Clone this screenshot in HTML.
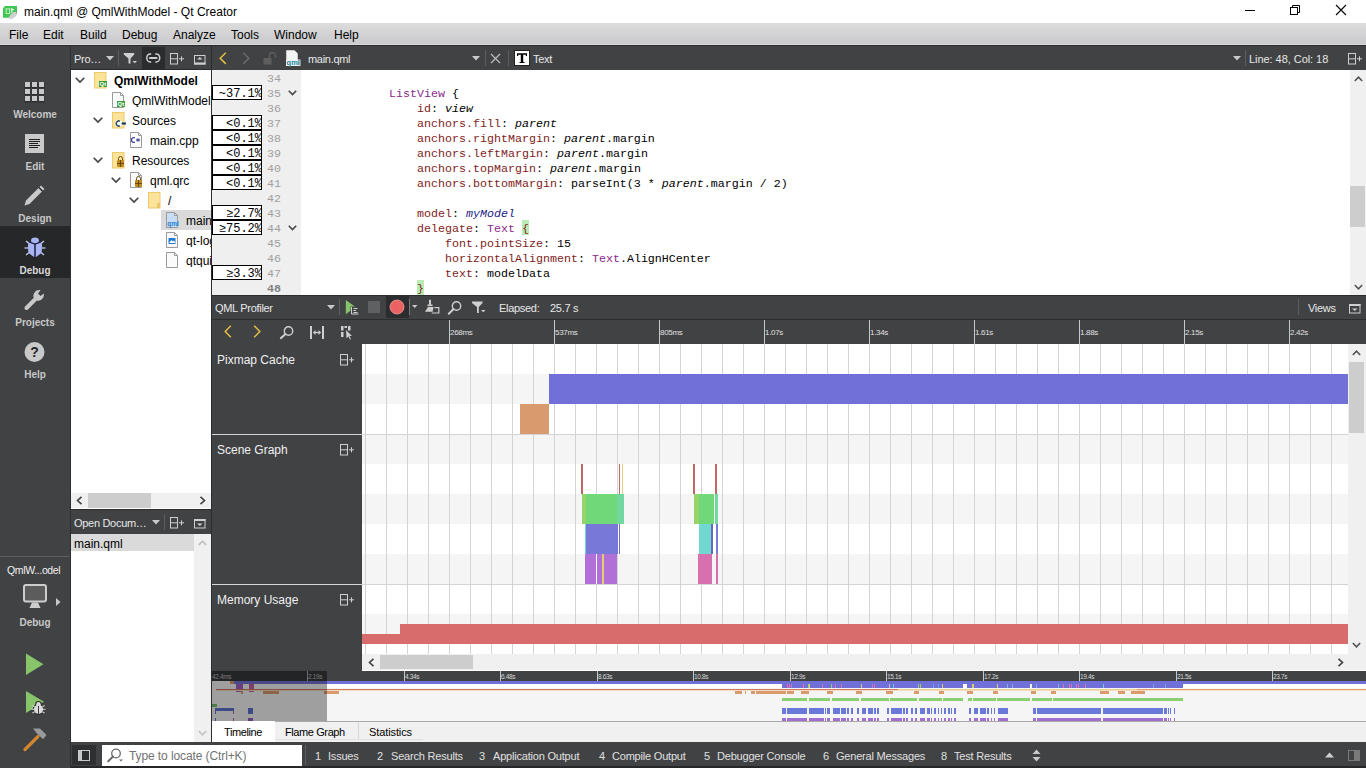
<!DOCTYPE html>
<html><head><meta charset="utf-8">
<style>
*{margin:0;padding:0;box-sizing:border-box}
html,body{width:1366px;height:768px;overflow:hidden;background:#fff;font-family:"Liberation Sans",sans-serif;font-size:12px;color:#000}
.a{position:absolute}
.t{position:absolute;white-space:pre;line-height:1}
.w{color:#e6e6e6}
.mono{font-family:"Liberation Mono",monospace}
svg{position:absolute;overflow:visible}
.mono{font-size:11.667px}
.tb{font-size:11px;color:#e8e8e8;letter-spacing:-0.3px}
.rl2{font-size:6.5px;color:#d8d8d8;letter-spacing:-0.35px}
.tab{font-size:11px;color:#000;letter-spacing:-0.4px}
.sb{font-size:11px;color:#e0e0e0;letter-spacing:-0.2px}
.rl{font-size:8px;color:#e0e0e0;letter-spacing:-0.3px}
.trk{font-size:12px;color:#f0f0f0}
.code{color:#000}
.box{left:212px;width:50px;height:15px;border:1px solid #000;background:#fff;overflow:hidden;font-family:"Liberation Mono",monospace;font-size:12px;line-height:14px;text-align:right;white-space:pre}
.box span{position:absolute;right:-1px;top:1px}
</style></head><body>
<!-- TITLE BAR -->
<div class="a" style="left:0;top:0;width:1366px;height:23px;background:#fff"></div>
<svg style="left:0;top:2px" width="24" height="20" viewBox="0 0 24 20"><path d="M3 6.5 L5 4 H17 V12 L11 15.8 H3Z" fill="#41c553"/><path d="M6.2 6.8 H9.5 V11.5 H6.2Z" fill="none" stroke="#b8f5b8" stroke-width="1.1"/><path d="M11.8 6 V11 M10.8 7.6 H14" stroke="#e8ffe8" stroke-width="1.1"/><ellipse cx="13" cy="13.5" rx="4.6" ry="2.4" transform="rotate(-40 13 13.5)" fill="#cfcfcf"/><path d="M16 10 L17 9.5 V12" fill="#8a8a8a"/></svg>
<div class="t" style="left:24px;top:6px;font-size:12px;color:#000">main.qml @ QmlWithModel - Qt Creator</div>
<div class="a" style="left:1245px;top:10px;width:10px;height:1px;background:#000"></div>
<svg style="left:1290px;top:5px" width="10" height="10"><rect x="0.5" y="2.5" width="7" height="7" fill="none" stroke="#000"/><path d="M2.5 2.5V0.5H9.5V7.5H7.5" fill="none" stroke="#000"/></svg>
<svg style="left:1336px;top:5px" width="10" height="10"><path d="M0 0L10 10M10 0L0 10" stroke="#000" stroke-width="1.1"/></svg>
<!-- MENU BAR -->
<div class="a" style="left:0;top:23px;width:1366px;height:22px;background:linear-gradient(#dcdcdd,#c9c9cb)"></div>
<div class="t" style="left:9px;top:29px">File</div>
<div class="t" style="left:43px;top:29px">Edit</div>
<div class="t" style="left:80px;top:29px">Build</div>
<div class="t" style="left:122px;top:29px">Debug</div>
<div class="t" style="left:173px;top:29px">Analyze</div>
<div class="t" style="left:231px;top:29px">Tools</div>
<div class="t" style="left:274px;top:29px">Window</div>
<div class="t" style="left:334px;top:29px">Help</div>
<div class="a" style="left:0;top:44px;width:1366px;height:1px;background:#dadadb"></div>
<div class="a" style="left:0;top:45px;width:1366px;height:1px;background:#2a2b2c"></div>

<!-- MODE BAR -->
<div class="a" style="left:0;top:46px;width:70px;height:722px;background:#404244"></div>
<div class="a" style="left:70px;top:46px;width:1px;height:722px;background:#2e2f30"></div>

<!-- selected debug -->
<div class="a" style="left:0;top:226px;width:70px;height:52px;background:#262728"></div>
<!-- welcome grid -->
<svg style="left:24px;top:81px" width="22" height="22" viewBox="0 0 22 22">
<g fill="#1e1f20" opacity=".6"><rect x="0.5" y="1.5" width="6" height="6"/><rect x="7.5" y="1.5" width="6" height="6"/><rect x="14.5" y="1.5" width="6" height="6"/><rect x="0.5" y="8.5" width="6" height="6"/><rect x="7.5" y="8.5" width="6" height="6"/><rect x="14.5" y="8.5" width="6" height="6"/><rect x="0.5" y="15.5" width="6" height="6"/><rect x="7.5" y="15.5" width="6" height="6"/><rect x="14.5" y="15.5" width="6" height="6"/></g>
<g fill="#c9c9c9"><rect x="1" y="1" width="5" height="5"/><rect x="8" y="1" width="5" height="5"/><rect x="15" y="1" width="5" height="5"/><rect x="1" y="8" width="5" height="5"/><rect x="8" y="8" width="5" height="5"/><rect x="15" y="8" width="5" height="5"/><rect x="1" y="15" width="5" height="5"/><rect x="8" y="15" width="5" height="5"/><rect x="15" y="15" width="5" height="5"/></g></svg>
<div class="t" style="left:0;width:70px;text-align:center;top:110px;font-weight:bold;font-size:10px;color:#c8c8c8">Welcome</div>
<!-- edit -->
<svg style="left:25px;top:134px" width="19" height="19" viewBox="0 0 19 19"><rect x="0" y="0" width="19" height="19" fill="#c9c9c9"/><g fill="#1e1e1e"><rect x="4" y="5" width="11" height="1"/><rect x="4" y="7" width="11" height="1"/><rect x="4" y="9" width="9" height="1"/><rect x="4" y="11" width="11" height="1"/><rect x="4" y="13" width="9" height="1"/></g></svg>
<div class="t" style="left:0;width:70px;text-align:center;top:162px;font-weight:bold;font-size:10px;color:#c8c8c8">Edit</div>
<!-- design -->
<svg style="left:23px;top:185px" width="22" height="22" viewBox="0 0 22 22"><path d="M1.5 20.5 L3 15.5 L15.5 3 L19 6.5 L6.5 19 Z" fill="#c9c9c9"/><path d="M16.5 2 L18 0.5 L21.5 4 L20 5.5 Z" fill="#c9c9c9"/><path d="M15.8 2.7 L19.3 6.2" stroke="#1e1e1e" stroke-width="1"/></svg>
<div class="t" style="left:0;width:70px;text-align:center;top:214px;font-weight:bold;font-size:10px;color:#c8c8c8">Design</div>
<!-- debug -->
<svg style="left:24px;top:237px" width="22" height="21" viewBox="0 0 22 21">
<g stroke="#c8cff0" stroke-width="1.2"><path d="M2 4 L5 6.5"/><path d="M20 4 L17 6.5"/><path d="M0.5 11 L4 11"/><path d="M21.5 11 L18 11"/><path d="M2 18 L5 15.5"/><path d="M20 18 L17 15.5"/></g>
<ellipse cx="11" cy="3.5" rx="4" ry="3" fill="#a9b5f2"/>
<path d="M11 6 L4.5 4.8 L3.8 10 L4.5 16 L10 20 L11 20 Z" fill="#a9b5f2"/>
<path d="M11 6 L17.5 4.8 L18.2 10 L17.5 16 L12 20 L11 20 Z" fill="#a9b5f2"/>
<path d="M5 5 L11 7 L17 5" fill="none" stroke="#15163a" stroke-width="1.2"/><path d="M11 7 V20.5" stroke="#15163a" stroke-width="1.4"/></svg>
<div class="t" style="left:0;width:70px;text-align:center;top:266px;font-weight:bold;font-size:10px;color:#d8d8d8">Debug</div>
<!-- projects wrench -->
<svg style="left:24px;top:289px" width="22" height="22" viewBox="0 0 22 22"><path d="M2.5 19 L11 10.5" stroke="#c9c9c9" stroke-width="4" stroke-linecap="round"/><path d="M9.5 8.5 A6 6 0 0 1 16.5 1.2 L14 4.5 L16.5 7 L19.8 4.5 A6 6 0 0 1 12.5 11.5 Z" fill="#c9c9c9"/></svg>
<div class="t" style="left:0;width:70px;text-align:center;top:318px;font-weight:bold;font-size:10px;color:#c8c8c8">Projects</div>
<!-- help -->
<svg style="left:24px;top:342px" width="21" height="21" viewBox="0 0 21 21"><circle cx="10.5" cy="10" r="10" fill="#c9c9c9"/><text x="10.5" y="15" text-anchor="middle" font-family="Liberation Sans" font-weight="bold" font-size="14" fill="#262626">?</text></svg>
<div class="t" style="left:0;width:70px;text-align:center;top:370px;font-weight:bold;font-size:10px;color:#c8c8c8">Help</div>
<!-- kit selector -->
<div class="a" style="left:0;top:556px;width:70px;height:1px;background:#5c5e60"></div>
<div class="t" style="left:7px;top:565px;font-size:10.5px;color:#f0f0f0;letter-spacing:-0.35px">QmlW...odel</div>
<svg style="left:23px;top:584px" width="25" height="25" viewBox="0 0 25 25"><rect x="1" y="1" width="22" height="16.5" rx="2" fill="#5c5c5c" stroke="#cdcdcd" stroke-width="2"/><path d="M9 18.5 L15 18.5 L17.5 24 L6.5 24 Z" fill="#cdcdcd"/></svg>
<svg style="left:56px;top:598px" width="5" height="8"><path d="M0 0 L4.5 4 L0 8Z" fill="#c9c9c9"/></svg>
<div class="t" style="left:0;width:70px;text-align:center;top:618px;font-weight:bold;font-size:10px;color:#c8c8c8">Debug</div>
<!-- run -->
<svg style="left:25px;top:653px" width="20" height="23"><path d="M1 0.5 L18.5 11.3 L1 22Z" fill="#88c46a"/></svg>
<svg style="left:25px;top:690px" width="22" height="26" viewBox="0 0 22 26"><path d="M1 1 L19 11.8 L1 23Z" fill="#88c46a"/><g stroke="#2b2b2b" stroke-width="2.2" fill="#2b2b2b"><circle cx="13.5" cy="14.3" r="2.2"/><ellipse cx="13.5" cy="19.3" rx="4.6" ry="4.6"/></g><g stroke="#dcdcdc" stroke-width="1.1"><path d="M7.5 15.5 L9.5 16.8 M19.5 15.5 L17.5 16.8 M6.5 19.3 H9 M20.5 19.3 H18 M7.5 23 L9.5 21.8 M19.5 23 L17.5 21.8"/></g><circle cx="13.5" cy="14.3" r="2.2" fill="#dcdcdc"/><ellipse cx="13.5" cy="19.3" rx="4.6" ry="4.6" fill="#dcdcdc"/><path d="M13.5 16 V24" stroke="#3a3a3a" stroke-width="1"/></svg>
<svg style="left:23px;top:728px" width="25" height="24" viewBox="0 0 25 24"><path d="M2 21.5 L15 8.5" stroke="#d4862e" stroke-width="3.2" stroke-linecap="round"/><path d="M10 0.5 L17 0.5 L23.5 7 L20 11.2 L13.5 5Z" fill="#9a9a9a"/></svg>


<!-- TREE TOOLBAR -->
<div class="a" style="left:71px;top:46px;width:140px;height:23px;background:#404244"></div>
<div class="a" style="left:71px;top:69px;width:140px;height:1px;background:#2b2c2d"></div>
<div class="t tb" style="left:74px;top:54px">Pro…</div>
<svg style="left:106px;top:56px" width="8" height="5"><path d="M0 0H8L4 4.5Z" fill="#c9c9c9"/></svg>
<div class="a" style="left:118px;top:50px;width:1px;height:16px;background:#5b5d5f"></div>
<svg style="left:123px;top:52px" width="15" height="13" viewBox="0 0 15 13"><path d="M0.8 1 H11.2 V2.5 L7.5 6.5 V11.5 L5.5 11.5 V6.5 L0.8 2.5Z" fill="#cfcfcf"/><path d="M9.5 9 H14 L11.75 11.2Z" fill="#cfcfcf"/></svg>
<div class="a" style="left:142px;top:47px;width:23px;height:22px;background:#2b2c2d"></div>
<svg style="left:146px;top:53px" width="15" height="10" viewBox="0 0 15 10"><path d="M5.2 0.9 H4.2 A3.4 4 0 0 0 4.2 8.9 H5.2 M9.3 0.9 H10.3 A3.4 4 0 0 1 10.3 8.9 H9.3" fill="none" stroke="#cfcfcf" stroke-width="1.5"/><rect x="3" y="4" width="8.5" height="1.9" rx=".9" fill="#cfcfcf"/></svg>
<svg style="left:170px;top:53px" width="15" height="12" viewBox="0 0 15 12"><rect x="0.5" y="0.5" width="7" height="10.5" fill="none" stroke="#cfcfcf"/><path d="M0.5 5.8 H7.5 M9 5.8 H14 M11.5 3.3 V8.3" stroke="#cfcfcf"/></svg>
<svg style="left:194px;top:55px" width="12" height="10" viewBox="0 0 12 10"><rect x="0.5" y="0.5" width="10.5" height="8.5" fill="none" stroke="#cfcfcf"/><rect x="0" y="7.5" width="11.5" height="2" fill="#cfcfcf"/><path d="M3 4.5 H8.5 L5.75 2Z" fill="#cfcfcf"/></svg>

<!-- TREE -->
<div class="a" style="left:71px;top:70px;width:140px;height:439px;background:#fff"></div>
<svg style="left:75px;top:77px" width="10" height="6" viewBox="0 0 10 6"><path d="M0.7 0.7 L5 5 L9.3 0.7" fill="none" stroke="#444" stroke-width="1.6"/></svg><svg style="left:94px;top:72px" width="14" height="16" viewBox="0 0 14 16"><rect x="0.5" y="0.5" width="11.5" height="15.5" fill="#fbe39a" stroke="#efc96a"/><rect x="5" y="9" width="8" height="6" fill="#3b9e3c"/><text x="5.6" y="14.4" font-size="6" font-family="Liberation Sans" font-weight="bold" fill="#fff">Qt</text></svg>
<div class="t" style="left:114px;top:75px;font-weight:bold">QmlWithModel</div>
<svg style="left:112px;top:92px" width="14" height="16" viewBox="0 0 14 16"><path d="M0.5 0.5 H8.5 L11.5 3.5 V15.5 H0.5Z" fill="#fafafa" stroke="#9a9a9a"/><path d="M8.5 0.5 V3.5 H11.5" fill="none" stroke="#9a9a9a"/><rect x="5" y="9" width="8" height="6" fill="#3b9e3c"/><text x="5.6" y="14.4" font-size="6" font-family="Liberation Sans" font-weight="bold" fill="#fff">Qt</text></svg>
<div class="t" style="left:132px;top:95px;width:79px;overflow:hidden">QmlWithModel</div>
<svg style="left:93px;top:117px" width="10" height="6" viewBox="0 0 10 6"><path d="M0.7 0.7 L5 5 L9.3 0.7" fill="none" stroke="#444" stroke-width="1.6"/></svg><svg style="left:112px;top:112px" width="14" height="16" viewBox="0 0 14 16"><rect x="0.5" y="0.5" width="11.5" height="15.5" fill="#fbe39a" stroke="#efc96a"/><circle cx="6.5" cy="11.5" r="3.6" fill="#f4fbff"/><path d="M8 9.2 A2.6 2.6 0 1 0 8 13.8" fill="none" stroke="#2f4f5f" stroke-width="1.5"/><path d="M9.5 11.5 H14 M11 10 V13 M13 10 V13" stroke="#16385a" stroke-width="1.1"/></svg>
<div class="t" style="left:132px;top:115px">Sources</div>
<svg style="left:130px;top:132px" width="14" height="16" viewBox="0 0 14 16"><path d="M0.5 0.5 H8.5 L11.5 3.5 V15.5 H0.5Z" fill="#fafafa" stroke="#9a9a9a"/><path d="M8.5 0.5 V3.5 H11.5" fill="none" stroke="#9a9a9a"/><path d="M4.8 5.8 A2.4 2.4 0 1 0 4.8 10.2" fill="none" stroke="#3b3b9a" stroke-width="1.3"/><path d="M6 8 H10 M7.3 6.5 V9.5 M8.8 6.5 V9.5" stroke="#3b3b9a" stroke-width="1"/></svg>
<div class="t" style="left:150px;top:135px">main.cpp</div>
<svg style="left:93px;top:157px" width="10" height="6" viewBox="0 0 10 6"><path d="M0.7 0.7 L5 5 L9.3 0.7" fill="none" stroke="#444" stroke-width="1.6"/></svg><svg style="left:112px;top:152px" width="14" height="16" viewBox="0 0 14 16"><rect x="0.5" y="0.5" width="11.5" height="15.5" fill="#fbe39a" stroke="#efc96a"/><rect x="5" y="8" width="7" height="7" rx="1" fill="#c08b1a"/><path d="M6.5 8 V6.5 A2 2 0 0 1 10.5 6.5 V8" fill="none" stroke="#6b4a10" stroke-width="1"/><path d="M5 11.5 H12 M8.5 8 V15" stroke="#5a3a08" stroke-width=".8"/></svg>
<div class="t" style="left:132px;top:155px">Resources</div>
<svg style="left:111px;top:177px" width="10" height="6" viewBox="0 0 10 6"><path d="M0.7 0.7 L5 5 L9.3 0.7" fill="none" stroke="#444" stroke-width="1.6"/></svg><svg style="left:130px;top:172px" width="14" height="16" viewBox="0 0 14 16"><path d="M0.5 0.5 H8.5 L11.5 3.5 V15.5 H0.5Z" fill="#fafafa" stroke="#9a9a9a"/><path d="M8.5 0.5 V3.5 H11.5" fill="none" stroke="#9a9a9a"/><rect x="5" y="8" width="7" height="7" rx="1" fill="#c08b1a"/><path d="M6.5 8 V6.5 A2 2 0 0 1 10.5 6.5 V8" fill="none" stroke="#6b4a10" stroke-width="1"/><path d="M5 11.5 H12 M8.5 8 V15" stroke="#5a3a08" stroke-width=".8"/></svg>
<div class="t" style="left:150px;top:175px">qml.qrc</div>
<svg style="left:129px;top:197px" width="10" height="6" viewBox="0 0 10 6"><path d="M0.7 0.7 L5 5 L9.3 0.7" fill="none" stroke="#444" stroke-width="1.6"/></svg><svg style="left:148px;top:192px" width="14" height="16" viewBox="0 0 14 16"><rect x="0.5" y="0.5" width="11.5" height="15.5" fill="#fbe39a" stroke="#efc96a"/><rect x="9" y="11" width="3" height="5" fill="#e9c66a"/></svg>
<div class="t" style="left:168px;top:195px">/</div>
<div class="a" style="left:161px;top:210px;width:50px;height:20px;background:#dadada"></div>
<svg style="left:166px;top:212px" width="14" height="16" viewBox="0 0 14 16"><path d="M0.5 0.5 H8.5 L11.5 3.5 V15.5 H0.5Z" fill="#c9def5" stroke="#9a9a9a"/><path d="M8.5 0.5 V3.5 H11.5" fill="none" stroke="#9a9a9a"/><text x="1.2" y="14" font-size="6.5" font-family="Liberation Sans" fill="#1f7fcf" font-weight="bold">qml</text></svg>
<div class="t" style="left:186px;top:215px;width:25px;overflow:hidden">main.qml</div>
<svg style="left:166px;top:232px" width="14" height="16" viewBox="0 0 14 16"><path d="M0.5 0.5 H8.5 L11.5 3.5 V15.5 H0.5Z" fill="#fafafa" stroke="#9a9a9a"/><path d="M8.5 0.5 V3.5 H11.5" fill="none" stroke="#9a9a9a"/><rect x="2.5" y="6" width="7" height="6" fill="#1f78d1"/><path d="M3 11 L5.5 8 L7 9.5 L8 8.5 L9.5 11Z" fill="#fff"/></svg>
<div class="t" style="left:186px;top:235px;width:25px;overflow:hidden">qt-logo.png</div>
<svg style="left:166px;top:252px" width="14" height="16" viewBox="0 0 14 16"><path d="M0.5 0.5 H8.5 L11.5 3.5 V15.5 H0.5Z" fill="#fafafa" stroke="#9a9a9a"/><path d="M8.5 0.5 V3.5 H11.5" fill="none" stroke="#9a9a9a"/></svg>
<div class="t" style="left:186px;top:255px;width:25px;overflow:hidden">qtquickcontrols2.conf</div>
<!-- tree hscroll -->
<div class="a" style="left:71px;top:493px;width:140px;height:15px;background:#f0f0f0"></div>
<div class="a" style="left:88px;top:493px;width:63px;height:15px;background:#cdcdcd"></div>
<svg style="left:76px;top:496px" width="7" height="9"><path d="M5.5 0.8 L1.5 4.5 L5.5 8.2" fill="none" stroke="#404040" stroke-width="1.6"/></svg>
<svg style="left:199px;top:496px" width="7" height="9"><path d="M1.5 0.8 L5.5 4.5 L1.5 8.2" fill="none" stroke="#404040" stroke-width="1.6"/></svg>

<!-- OPEN DOCUMENTS -->
<div class="a" style="left:71px;top:509px;width:140px;height:25px;background:#404244"></div>
<div class="a" style="left:71px;top:509px;width:140px;height:1px;background:#2b2c2d"></div>
<div class="t tb" style="left:74px;top:518px">Open Docum…</div>
<svg style="left:152px;top:520px" width="8" height="5"><path d="M0 0H8L4 4.5Z" fill="#c9c9c9"/></svg>
<div class="a" style="left:164px;top:514px;width:1px;height:16px;background:#5b5d5f"></div>
<svg style="left:170px;top:517px" width="15" height="12" viewBox="0 0 15 12"><rect x="0.5" y="0.5" width="7" height="10.5" fill="none" stroke="#cfcfcf"/><path d="M0.5 5.8 H7.5 M9 5.8 H14 M11.5 3.3 V8.3" stroke="#cfcfcf"/></svg>
<svg style="left:194px;top:519px" width="12" height="10" viewBox="0 0 12 10"><rect x="0.5" y="0.5" width="10.5" height="8.5" fill="none" stroke="#cfcfcf"/><rect x="0" y="0" width="11.5" height="2" fill="#cfcfcf"/><path d="M3 4.5 H8.5 L5.75 7Z" fill="#cfcfcf"/></svg>
<div class="a" style="left:71px;top:534px;width:140px;height:208px;background:#fff"></div>
<div class="a" style="left:71px;top:534px;width:123px;height:17px;background:#dadada"></div>
<div class="t" style="left:74px;top:538px">main.qml</div>
<div class="a" style="left:194px;top:534px;width:17px;height:208px;background:#f0f0f0"></div>
<svg style="left:198px;top:540px" width="9" height="6"><path d="M0.8 5 L4.5 1.2 L8.2 5" fill="none" stroke="#c2c2c2" stroke-width="1.8"/></svg>
<svg style="left:198px;top:730px" width="9" height="6"><path d="M0.8 1 L4.5 4.8 L8.2 1" fill="none" stroke="#c2c2c2" stroke-width="1.5"/></svg>
<div class="a" style="left:211px;top:46px;width:1px;height:696px;background:#2b2c2d"></div>


<!-- EDITOR TOOLBAR -->
<div class="a" style="left:212px;top:46px;width:1154px;height:24px;background:#404244"></div>
<svg style="left:219px;top:52px" width="8" height="13"><path d="M6.8 0.7 L1.2 6.3 L6.8 11.9" fill="none" stroke="#e3bf45" stroke-width="1.5"/></svg>
<svg style="left:242px;top:52px" width="8" height="13"><path d="M1.2 0.7 L6.8 6.3 L1.2 11.9" fill="none" stroke="#6a6a6a" stroke-width="1.5"/></svg>
<svg style="left:263px;top:52px" width="14" height="13" viewBox="0 0 14 13"><rect x="0.5" y="6" width="8" height="6.5" fill="#5e5e5e"/><path d="M6.5 6 V3.5 A3 3 0 0 1 12.5 3.5 V5.5" fill="none" stroke="#5e5e5e" stroke-width="1.4"/></svg>
<svg style="left:286px;top:50px" width="15" height="16" viewBox="0 0 15 16"><path d="M0.5 0.5 H8.5 L11.5 3.5 V15.5 H0.5Z" fill="#f4f4f4" stroke="#c8c8c8"/><rect x="0" y="9.5" width="14.5" height="6.5" fill="#f4f4f4" opacity=".9"/><text x="0.6" y="14.6" font-size="7.5" font-family="Liberation Sans" fill="#17859a" font-weight="bold">qml</text></svg>
<div class="t tb" style="left:308px;top:54px">main.qml</div>
<svg style="left:472px;top:56px" width="8" height="5"><path d="M0 0H8L4 4.5Z" fill="#c9c9c9"/></svg>
<div class="a" style="left:485px;top:50px;width:1px;height:16px;background:#5b5d5f"></div>
<svg style="left:490px;top:53px" width="11" height="11"><path d="M1 1 L10 10 M10 1 L1 10" stroke="#bdbdbd" stroke-width="1.2"/></svg>
<div class="a" style="left:508px;top:50px;width:1px;height:16px;background:#5b5d5f"></div>
<svg style="left:514px;top:50px" width="16" height="16" viewBox="0 0 16 16"><rect x="0.5" y="0.5" width="15" height="15" fill="#fff" stroke="#222"/><path d="M3 3.2 H13 V6 H11.8 V4.8 H9.2 V12 H10.5 V13 H5.5 V12 H6.8 V4.8 H4.2 V6 H3Z" fill="#000"/></svg>
<div class="t tb" style="left:533px;top:54px">Text</div>
<svg style="left:1233px;top:56px" width="8" height="5"><path d="M0 0H8L4 4.5Z" fill="#c9c9c9"/></svg>
<div class="a" style="left:1245px;top:50px;width:1px;height:16px;background:#5b5d5f"></div>
<div class="t tb" style="left:1249px;top:54px;letter-spacing:-0.05px">Line: 48, Col: 18</div>
<svg style="left:1348px;top:53px" width="15" height="12" viewBox="0 0 15 12"><rect x="0.5" y="0.5" width="7" height="10.5" fill="none" stroke="#cfcfcf"/><path d="M0.5 5.8 H7.5 M9 5.8 H14 M11.5 3.3 V8.3" stroke="#cfcfcf"/></svg>

<!-- EDITOR -->
<div class="a" style="left:212px;top:70px;width:1154px;height:225px;background:#fff;overflow:hidden">
</div>
<div class="a" style="left:212px;top:70px;width:89px;height:225px;background:#efefef"></div>
<div class="a box" style="top:85px"><span>~37.1%</span></div>
<div class="a box" style="top:115px"><span>&lt;0.1%</span></div>
<div class="a box" style="top:130px"><span>&lt;0.1%</span></div>
<div class="a box" style="top:145px"><span>&lt;0.1%</span></div>
<div class="a box" style="top:160px"><span>&lt;0.1%</span></div>
<div class="a box" style="top:175px"><span>&lt;0.1%</span></div>
<div class="a box" style="top:205px"><span>≥2.7%</span></div>
<div class="a box" style="top:220px"><span>≥75.2%</span></div>
<div class="a box" style="top:265px"><span>≥3.3%</span></div>
<div class="t mono" style="left:250px;width:31px;text-align:right;top:74px;color:#a0a0a0;">34</div>
<div class="t mono" style="left:250px;width:31px;text-align:right;top:89px;color:#a0a0a0;">35</div>
<div class="t mono" style="left:250px;width:31px;text-align:right;top:104px;color:#a0a0a0;">36</div>
<div class="t mono" style="left:250px;width:31px;text-align:right;top:119px;color:#a0a0a0;">37</div>
<div class="t mono" style="left:250px;width:31px;text-align:right;top:134px;color:#a0a0a0;">38</div>
<div class="t mono" style="left:250px;width:31px;text-align:right;top:149px;color:#a0a0a0;">39</div>
<div class="t mono" style="left:250px;width:31px;text-align:right;top:164px;color:#a0a0a0;">40</div>
<div class="t mono" style="left:250px;width:31px;text-align:right;top:179px;color:#a0a0a0;">41</div>
<div class="t mono" style="left:250px;width:31px;text-align:right;top:194px;color:#a0a0a0;">42</div>
<div class="t mono" style="left:250px;width:31px;text-align:right;top:209px;color:#a0a0a0;">43</div>
<div class="t mono" style="left:250px;width:31px;text-align:right;top:224px;color:#a0a0a0;">44</div>
<div class="t mono" style="left:250px;width:31px;text-align:right;top:239px;color:#a0a0a0;">45</div>
<div class="t mono" style="left:250px;width:31px;text-align:right;top:254px;color:#a0a0a0;">46</div>
<div class="t mono" style="left:250px;width:31px;text-align:right;top:269px;color:#a0a0a0;">47</div>
<div class="t mono" style="left:250px;width:31px;text-align:right;top:284px;color:#a0a0a0;font-weight:bold;color:#808080;">48</div>
<svg style="left:288px;top:90px" width="9" height="6"><path d="M0.8 0.8 L4.5 4.5 L8.2 0.8" fill="none" stroke="#444" stroke-width="1.6"/></svg><svg style="left:288px;top:225px" width="9" height="6"><path d="M0.8 0.8 L4.5 4.5 L8.2 0.8" fill="none" stroke="#444" stroke-width="1.6"/></svg><div class="a" style="left:522px;top:220px;width:7px;height:15px;background:#b9ebb4"></div>
<div class="a" style="left:417px;top:280px;width:7px;height:15px;background:#b9ebb4"></div>
<div class="t mono code" style="left:389px;top:89px"><span style="color:#8a2b8a">ListView</span> {</div>
<div class="t mono code" style="left:417px;top:104px"><span style="color:#7f1d1d">id</span>: <i>view</i></div>
<div class="t mono code" style="left:417px;top:119px"><span style="color:#7f1d1d">anchors.fill</span>: <i>parent</i></div>
<div class="t mono code" style="left:417px;top:134px"><span style="color:#7f1d1d">anchors.rightMargin</span>: <i>parent</i>.margin</div>
<div class="t mono code" style="left:417px;top:149px"><span style="color:#7f1d1d">anchors.leftMargin</span>: <i>parent</i>.margin</div>
<div class="t mono code" style="left:417px;top:164px"><span style="color:#7f1d1d">anchors.topMargin</span>: <i>parent</i>.margin</div>
<div class="t mono code" style="left:417px;top:179px"><span style="color:#7f1d1d">anchors.bottomMargin</span>: parseInt(3 * <i>parent</i>.margin / 2)</div>
<div class="t mono code" style="left:417px;top:209px"><span style="color:#7f1d1d">model</span>: <i style="color:#23238a">myModel</i></div>
<div class="t mono code" style="left:417px;top:224px"><span style="color:#7f1d1d">delegate</span>: <span style="color:#8a2b8a">Text</span> <span style="color:#8a1f1f">{</span></div>
<div class="t mono code" style="left:445px;top:239px"><span style="color:#7f1d1d">font.pointSize</span>: 15</div>
<div class="t mono code" style="left:445px;top:254px"><span style="color:#7f1d1d">horizontalAlignment</span>: <span style="color:#8a2b8a">Text</span>.AlignHCenter</div>
<div class="t mono code" style="left:445px;top:269px"><span style="color:#7f1d1d">text</span>: modelData</div>
<div class="t mono code" style="left:417px;top:284px"><span style="color:#8a1f1f">}</span></div>

<div class="a" style="left:1350px;top:70px;width:16px;height:225px;background:#f0f0f0"></div>
<div class="a" style="left:1350px;top:186px;width:15px;height:41px;background:#cdcdcd"></div>
<svg style="left:1354px;top:76px" width="9" height="6"><path d="M0.8 5 L4.5 1.2 L8.2 5" fill="none" stroke="#505050" stroke-width="1.5"/></svg>
<svg style="left:1354px;top:284px" width="9" height="6"><path d="M0.8 1 L4.5 4.8 L8.2 1" fill="none" stroke="#505050" stroke-width="1.5"/></svg>


<!-- PROFILER TOOLBAR -->
<div class="a" style="left:212px;top:295px;width:1154px;height:1px;background:#2b2c2d"></div>
<div class="a" style="left:212px;top:296px;width:1154px;height:23px;background:#404244"></div>
<div class="a" style="left:212px;top:319px;width:1154px;height:1px;background:#2b2c2d"></div>
<div class="t tb" style="left:215px;top:303px">QML Profiler</div>
<svg style="left:327px;top:305px" width="8" height="5"><path d="M0 0H8L4 4.5Z" fill="#c9c9c9"/></svg>
<div class="a" style="left:339px;top:299px;width:1px;height:16px;background:#5b5d5f"></div>
<svg style="left:345px;top:300px" width="15" height="15" viewBox="0 0 15 15"><path d="M0.8 0 L10.5 7 L0.8 14.2Z" fill="#86c46b"/><rect x="5.5" y="6.5" width="9" height="8.5" fill="#404244"/><path d="M6.5 7 V14 H13.5 M8.5 8.5 H12.5 M8.5 10.5 H11 M8.5 12.5 H12.5" fill="none" stroke="#d0d0d0" stroke-width="1"/></svg>
<div class="a" style="left:368px;top:301px;width:12px;height:12px;background:#5f6062"></div>
<div class="a" style="left:386px;top:296px;width:23px;height:22px;background:#2b2c2d"></div>
<svg style="left:389px;top:299px" width="16" height="16"><circle cx="8" cy="8" r="7" fill="#ec6161" stroke="#f5a0a0" stroke-width="0.8"/></svg>
<div class="a" style="left:409px;top:299px;width:1px;height:16px;background:#77797b"></div>
<svg style="left:412px;top:305px" width="6" height="4"><path d="M0 0H5.5L2.75 3Z" fill="#c9c9c9"/></svg>
<svg style="left:425px;top:299px" width="15" height="16" viewBox="0 0 15 16"><rect x="4" y="0.8" width="2" height="5" fill="#cfcfcf"/><rect x="2.5" y="5.5" width="5" height="1.6" fill="#cfcfcf"/><path d="M3 8 H8.6 L7.6 12.8 H0Z" fill="#cfcfcf"/><path d="M9.5 8.6 H13.8 V14 H6.8" fill="none" stroke="#cfcfcf" stroke-width="1.2"/></svg>
<svg style="left:448px;top:301px" width="14" height="14" viewBox="0 0 14 14"><circle cx="8.5" cy="5" r="4.2" fill="none" stroke="#cfcfcf" stroke-width="1.4"/><path d="M5.5 8 L0.8 12.7" stroke="#cfcfcf" stroke-width="2" stroke-linecap="round"/></svg>
<svg style="left:472px;top:301px" width="14" height="13" viewBox="0 0 14 13"><path d="M0 0.5 H10.5 V2 L6.8 6 V12 L5 12 V6 L0 2Z" fill="#cfcfcf"/><path d="M9 9 H13.5 L11.25 11.2Z" fill="#cfcfcf"/></svg>
<div class="t tb" style="left:499px;top:303px">Elapsed:</div>
<div class="t tb" style="left:550px;top:303px">25.7 s</div>
<div class="a" style="left:1298px;top:299px;width:1px;height:16px;background:#5b5d5f"></div>
<div class="t tb" style="left:1308px;top:303px">Views</div>
<svg style="left:1349px;top:304px" width="12" height="10" viewBox="0 0 12 10"><rect x="0.5" y="0.5" width="10.5" height="8.5" fill="none" stroke="#cfcfcf"/><rect x="0" y="0" width="11.5" height="2" fill="#cfcfcf"/><path d="M3 4.5 H8.5 L5.75 7Z" fill="#cfcfcf"/></svg>

<!-- TIMELINE TOOLBAR / RULER -->
<div class="a" style="left:212px;top:320px;width:1154px;height:24px;background:#404244"></div>
<svg style="left:224px;top:325px" width="8" height="14"><path d="M6.8 0.7 L1.2 6.5 L6.8 12.3" fill="none" stroke="#e3bf45" stroke-width="1.5"/></svg>
<svg style="left:253px;top:325px" width="8" height="14"><path d="M1.2 0.7 L6.8 6.5 L1.2 12.3" fill="none" stroke="#e3bf45" stroke-width="1.5"/></svg>
<svg style="left:280px;top:326px" width="14" height="13" viewBox="0 0 14 13"><circle cx="8.5" cy="5" r="4.2" fill="none" stroke="#cfcfcf" stroke-width="1.4"/><path d="M5.5 8 L0.8 12.2" stroke="#cfcfcf" stroke-width="2" stroke-linecap="round"/></svg>
<svg style="left:310px;top:326px" width="14" height="13" viewBox="0 0 14 13"><path d="M1 0 V13 M13 0 V13" stroke="#cfcfcf" stroke-width="2"/><path d="M3.5 6.5 H10.5" stroke="#cfcfcf" stroke-width="1.3"/><path d="M3 6.5 L5.5 4 V9Z M11 6.5 L8.5 4 V9Z" fill="#cfcfcf"/></svg>
<svg style="left:341px;top:326px" width="12" height="14" viewBox="0 0 12 14"><g fill="#cfcfcf"><rect x="0" y="0" width="2.5" height="4.5"/><rect x="3.5" y="0" width="2.5" height="2"/><rect x="7" y="0" width="2.5" height="4.5"/><rect x="0" y="6" width="2.5" height="5"/><path d="M5 4 L11 10 L8.5 10 L10 13 L9 13.6 L7.4 10.6 L5.5 12.2Z"/></g></svg>

<div class="a" style="left:449px;top:320px;width:1px;height:24px;background:#c8c8c8"></div>
<div class="t rl" style="left:450px;top:329px">268ms</div>
<div class="a" style="left:554px;top:320px;width:1px;height:24px;background:#c8c8c8"></div>
<div class="t rl" style="left:555px;top:329px">537ms</div>
<div class="a" style="left:659px;top:320px;width:1px;height:24px;background:#c8c8c8"></div>
<div class="t rl" style="left:660px;top:329px">805ms</div>
<div class="a" style="left:764px;top:320px;width:1px;height:24px;background:#c8c8c8"></div>
<div class="t rl" style="left:765px;top:329px">1.07s</div>
<div class="a" style="left:869px;top:320px;width:1px;height:24px;background:#c8c8c8"></div>
<div class="t rl" style="left:870px;top:329px">1.34s</div>
<div class="a" style="left:974px;top:320px;width:1px;height:24px;background:#c8c8c8"></div>
<div class="t rl" style="left:975px;top:329px">1.61s</div>
<div class="a" style="left:1079px;top:320px;width:1px;height:24px;background:#c8c8c8"></div>
<div class="t rl" style="left:1080px;top:329px">1.88s</div>
<div class="a" style="left:1184px;top:320px;width:1px;height:24px;background:#c8c8c8"></div>
<div class="t rl" style="left:1185px;top:329px">2.15s</div>
<div class="a" style="left:1289px;top:320px;width:1px;height:24px;background:#c8c8c8"></div>
<div class="t rl" style="left:1290px;top:329px">2.42s</div>

<div class="a" style="left:212px;top:344px;width:150px;height:327px;background:#404244"></div>
<div class="t trk" style="left:217px;top:354px">Pixmap Cache</div>
<div class="t trk" style="left:217px;top:444px">Scene Graph</div>
<div class="t trk" style="left:217px;top:594px">Memory Usage</div>
<div class="a" style="left:212px;top:434px;width:150px;height:1px;background:#d6d6d6"></div>
<div class="a" style="left:212px;top:584px;width:150px;height:1px;background:#d6d6d6"></div>

<svg style="left:340px;top:354px" width="15" height="12" viewBox="0 0 15 12"><rect x="0.5" y="0.5" width="7" height="10.5" fill="none" stroke="#cfcfcf"/><path d="M0.5 5.8 H7.5 M9 5.8 H14 M11.5 3.3 V8.3" stroke="#cfcfcf"/></svg>
<svg style="left:340px;top:444px" width="15" height="12" viewBox="0 0 15 12"><rect x="0.5" y="0.5" width="7" height="10.5" fill="none" stroke="#cfcfcf"/><path d="M0.5 5.8 H7.5 M9 5.8 H14 M11.5 3.3 V8.3" stroke="#cfcfcf"/></svg>
<svg style="left:340px;top:594px" width="15" height="12" viewBox="0 0 15 12"><rect x="0.5" y="0.5" width="7" height="10.5" fill="none" stroke="#cfcfcf"/><path d="M0.5 5.8 H7.5 M9 5.8 H14 M11.5 3.3 V8.3" stroke="#cfcfcf"/></svg>
<div class="a" style="left:362px;top:344px;width:986px;height:310px;background:#fff;overflow:hidden">
<div class="a" style="left:0;top:30px;width:986px;height:30px;background:#f5f5f5"></div>
<div class="a" style="left:0;top:91px;width:986px;height:29px;background:#f5f5f5"></div>
<div class="a" style="left:0;top:150px;width:986px;height:30px;background:#f5f5f5"></div>
<div class="a" style="left:0;top:210px;width:986px;height:30px;background:#f5f5f5"></div>
<div class="a" style="left:0;top:270px;width:986px;height:30px;background:#f5f5f5"></div>
<div class="a" style="left:3px;top:0;width:1px;height:310px;background:#d4d4d4"></div>
<div class="a" style="left:24px;top:0;width:1px;height:310px;background:#d4d4d4"></div>
<div class="a" style="left:45px;top:0;width:1px;height:310px;background:#d4d4d4"></div>
<div class="a" style="left:66px;top:0;width:1px;height:310px;background:#d4d4d4"></div>
<div class="a" style="left:87px;top:0;width:1px;height:310px;background:#d4d4d4"></div>
<div class="a" style="left:108px;top:0;width:1px;height:310px;background:#d4d4d4"></div>
<div class="a" style="left:129px;top:0;width:1px;height:310px;background:#d4d4d4"></div>
<div class="a" style="left:150px;top:0;width:1px;height:310px;background:#d4d4d4"></div>
<div class="a" style="left:171px;top:0;width:1px;height:310px;background:#d4d4d4"></div>
<div class="a" style="left:192px;top:0;width:1px;height:310px;background:#d4d4d4"></div>
<div class="a" style="left:213px;top:0;width:1px;height:310px;background:#d4d4d4"></div>
<div class="a" style="left:234px;top:0;width:1px;height:310px;background:#d4d4d4"></div>
<div class="a" style="left:255px;top:0;width:1px;height:310px;background:#d4d4d4"></div>
<div class="a" style="left:276px;top:0;width:1px;height:310px;background:#d4d4d4"></div>
<div class="a" style="left:297px;top:0;width:1px;height:310px;background:#d4d4d4"></div>
<div class="a" style="left:318px;top:0;width:1px;height:310px;background:#d4d4d4"></div>
<div class="a" style="left:339px;top:0;width:1px;height:310px;background:#d4d4d4"></div>
<div class="a" style="left:360px;top:0;width:1px;height:310px;background:#d4d4d4"></div>
<div class="a" style="left:381px;top:0;width:1px;height:310px;background:#d4d4d4"></div>
<div class="a" style="left:402px;top:0;width:1px;height:310px;background:#d4d4d4"></div>
<div class="a" style="left:423px;top:0;width:1px;height:310px;background:#d4d4d4"></div>
<div class="a" style="left:444px;top:0;width:1px;height:310px;background:#d4d4d4"></div>
<div class="a" style="left:465px;top:0;width:1px;height:310px;background:#d4d4d4"></div>
<div class="a" style="left:486px;top:0;width:1px;height:310px;background:#d4d4d4"></div>
<div class="a" style="left:507px;top:0;width:1px;height:310px;background:#d4d4d4"></div>
<div class="a" style="left:528px;top:0;width:1px;height:310px;background:#d4d4d4"></div>
<div class="a" style="left:549px;top:0;width:1px;height:310px;background:#d4d4d4"></div>
<div class="a" style="left:570px;top:0;width:1px;height:310px;background:#d4d4d4"></div>
<div class="a" style="left:591px;top:0;width:1px;height:310px;background:#d4d4d4"></div>
<div class="a" style="left:612px;top:0;width:1px;height:310px;background:#d4d4d4"></div>
<div class="a" style="left:633px;top:0;width:1px;height:310px;background:#d4d4d4"></div>
<div class="a" style="left:654px;top:0;width:1px;height:310px;background:#d4d4d4"></div>
<div class="a" style="left:675px;top:0;width:1px;height:310px;background:#d4d4d4"></div>
<div class="a" style="left:696px;top:0;width:1px;height:310px;background:#d4d4d4"></div>
<div class="a" style="left:717px;top:0;width:1px;height:310px;background:#d4d4d4"></div>
<div class="a" style="left:738px;top:0;width:1px;height:310px;background:#d4d4d4"></div>
<div class="a" style="left:759px;top:0;width:1px;height:310px;background:#d4d4d4"></div>
<div class="a" style="left:780px;top:0;width:1px;height:310px;background:#d4d4d4"></div>
<div class="a" style="left:801px;top:0;width:1px;height:310px;background:#d4d4d4"></div>
<div class="a" style="left:822px;top:0;width:1px;height:310px;background:#d4d4d4"></div>
<div class="a" style="left:843px;top:0;width:1px;height:310px;background:#d4d4d4"></div>
<div class="a" style="left:864px;top:0;width:1px;height:310px;background:#d4d4d4"></div>
<div class="a" style="left:885px;top:0;width:1px;height:310px;background:#d4d4d4"></div>
<div class="a" style="left:906px;top:0;width:1px;height:310px;background:#d4d4d4"></div>
<div class="a" style="left:927px;top:0;width:1px;height:310px;background:#d4d4d4"></div>
<div class="a" style="left:948px;top:0;width:1px;height:310px;background:#d4d4d4"></div>
<div class="a" style="left:969px;top:0;width:1px;height:310px;background:#d4d4d4"></div>
<div class="a" style="left:0;top:90px;width:986px;height:1px;background:#d4d4d4"></div>
<div class="a" style="left:0;top:240px;width:986px;height:1px;background:#d4d4d4"></div>
<div class="a" style="left:187px;top:30px;width:799px;height:30px;background:#7070d8"></div>
<div class="a" style="left:158px;top:60px;width:29px;height:30px;background:#d99a6d"></div>
<div class="a" style="left:219px;top:120px;width:2px;height:30px;background:#c06868"></div>
<div class="a" style="left:257px;top:120px;width:1px;height:30px;background:#c06868"></div>
<div class="a" style="left:260px;top:120px;width:1px;height:30px;background:#e0d080"></div>
<div class="a" style="left:220px;top:150px;width:4px;height:30px;background:#96d46a"></div>
<div class="a" style="left:224px;top:150px;width:31px;height:30px;background:#70d878"></div>
<div class="a" style="left:255px;top:150px;width:7px;height:30px;background:#70d8a0"></div>
<div class="a" style="left:223px;top:180px;width:1px;height:30px;background:#70d8d8"></div>
<div class="a" style="left:224px;top:180px;width:32px;height:30px;background:#7878d8"></div>
<div class="a" style="left:257px;top:180px;width:1px;height:30px;background:#7070c8"></div>
<div class="a" style="left:223px;top:210px;width:11px;height:30px;background:#b070d8"></div>
<div class="a" style="left:234px;top:210px;width:1px;height:30px;background:#ffffff"></div>
<div class="a" style="left:235px;top:210px;width:5px;height:30px;background:#b070d8"></div>
<div class="a" style="left:240px;top:210px;width:2px;height:30px;background:#e0d070"></div>
<div class="a" style="left:242px;top:210px;width:13px;height:30px;background:#b070d8"></div>
<div class="a" style="left:331px;top:120px;width:2px;height:30px;background:#c06868"></div>
<div class="a" style="left:353px;top:120px;width:2px;height:30px;background:#c06868"></div>
<div class="a" style="left:332px;top:150px;width:5px;height:30px;background:#96d46a"></div>
<div class="a" style="left:337px;top:150px;width:15px;height:30px;background:#70d878"></div>
<div class="a" style="left:353px;top:150px;width:3px;height:30px;background:#70d8a0"></div>
<div class="a" style="left:337px;top:180px;width:12px;height:30px;background:#70d8d0"></div>
<div class="a" style="left:349px;top:180px;width:2px;height:30px;background:#6868c0"></div>
<div class="a" style="left:354px;top:180px;width:2px;height:30px;background:#7878d8"></div>
<div class="a" style="left:336px;top:210px;width:14px;height:30px;background:#d870b0"></div>
<div class="a" style="left:354px;top:210px;width:2px;height:30px;background:#d870b0"></div>
<div class="a" style="left:0px;top:290px;width:38px;height:10px;background:#d86c6c"></div>
<div class="a" style="left:38px;top:280px;width:948px;height:20px;background:#d86c6c"></div>
</div>

<div class="a" style="left:1348px;top:344px;width:18px;height:310px;background:#f0f0f0"></div>
<div class="a" style="left:1349px;top:362px;width:15px;height:71px;background:#cdcdcd"></div>
<svg style="left:1352px;top:350px" width="9" height="6"><path d="M0.8 5 L4.5 1.2 L8.2 5" fill="none" stroke="#505050" stroke-width="1.5"/></svg>
<svg style="left:1352px;top:642px" width="9" height="6"><path d="M0.8 1 L4.5 4.8 L8.2 1" fill="none" stroke="#505050" stroke-width="1.5"/></svg>
<div class="a" style="left:362px;top:654px;width:1004px;height:16px;background:#f0f0f0"></div>
<div class="a" style="left:380px;top:655px;width:93px;height:14px;background:#cdcdcd"></div>
<svg style="left:368px;top:658px" width="7" height="9"><path d="M5.5 0.8 L1.5 4.5 L5.5 8.2" fill="none" stroke="#404040" stroke-width="1.6"/></svg>
<svg style="left:1337px;top:658px" width="7" height="9"><path d="M1.5 0.8 L5.5 4.5 L1.5 8.2" fill="none" stroke="#404040" stroke-width="1.6"/></svg>
<div class="a" style="left:362px;top:670px;width:1004px;height:1px;background:#fff"></div>


<!-- OVERVIEW -->
<div class="a" style="left:212px;top:671px;width:1154px;height:10px;background:#404244"></div>
<div class="a" style="left:212px;top:681px;width:1154px;height:40px;background:#f5f5f5"></div>
<div class="a" style="left:212px;top:721px;width:1154px;height:1px;background:#a9a9a9"></div>

<div class="t rl2" style="left:212px;top:674px">42.4ms</div>
<div class="a" style="left:307px;top:671px;width:1px;height:10px;background:#c8c8c8"></div>
<div class="t rl2" style="left:308px;top:674px">2.19s</div>
<div class="a" style="left:404px;top:671px;width:1px;height:10px;background:#c8c8c8"></div>
<div class="t rl2" style="left:405px;top:674px">4.34s</div>
<div class="a" style="left:500px;top:671px;width:1px;height:10px;background:#c8c8c8"></div>
<div class="t rl2" style="left:501px;top:674px">6.48s</div>
<div class="a" style="left:597px;top:671px;width:1px;height:10px;background:#c8c8c8"></div>
<div class="t rl2" style="left:598px;top:674px">8.63s</div>
<div class="a" style="left:693px;top:671px;width:1px;height:10px;background:#c8c8c8"></div>
<div class="t rl2" style="left:694px;top:674px">10.8s</div>
<div class="a" style="left:790px;top:671px;width:1px;height:10px;background:#c8c8c8"></div>
<div class="t rl2" style="left:791px;top:674px">12.9s</div>
<div class="a" style="left:886px;top:671px;width:1px;height:10px;background:#c8c8c8"></div>
<div class="t rl2" style="left:887px;top:674px">15.1s</div>
<div class="a" style="left:983px;top:671px;width:1px;height:10px;background:#c8c8c8"></div>
<div class="t rl2" style="left:984px;top:674px">17.2s</div>
<div class="a" style="left:1079px;top:671px;width:1px;height:10px;background:#c8c8c8"></div>
<div class="t rl2" style="left:1080px;top:674px">19.4s</div>
<div class="a" style="left:1176px;top:671px;width:1px;height:10px;background:#c8c8c8"></div>
<div class="t rl2" style="left:1177px;top:674px">21.5s</div>
<div class="a" style="left:1272px;top:671px;width:1px;height:10px;background:#c8c8c8"></div>
<div class="t rl2" style="left:1273px;top:674px">23.7s</div>
<div class="a" style="left:230px;top:681px;width:4px;height:3px;background:#d99a6d"></div>
<div class="a" style="left:234px;top:681px;width:1132px;height:3px;background:#7070d8"></div>
<div class="a" style="left:782px;top:684px;width:401px;height:4px;background:#7070d8"></div>
<div class="a" style="left:684px;top:684px;width:98px;height:4px;background:#ffffff"></div>
<div class="a" style="left:1183px;top:684px;width:183px;height:4px;background:#ffffff"></div>
<div class="a" style="left:327px;top:684px;width:357px;height:4px;background:#ffffff"></div>
<div class="a" style="left:212px;top:684px;width:115px;height:4px;background:#f5f5f5"></div>
<div class="a" style="left:236px;top:684px;width:7px;height:8px;background:#a060c0"></div>
<div class="a" style="left:249px;top:684px;width:5px;height:8px;background:#c060a0"></div>
<div class="a" style="left:787px;top:684px;width:1px;height:4px;background:#e070b0"></div>
<div class="a" style="left:789px;top:684px;width:1px;height:4px;background:#e070b0"></div>
<div class="a" style="left:791px;top:684px;width:1px;height:4px;background:#e070b0"></div>
<div class="a" style="left:803px;top:684px;width:1px;height:4px;background:#e070b0"></div>
<div class="a" style="left:808px;top:684px;width:1px;height:4px;background:#a0d080"></div>
<div class="a" style="left:809px;top:684px;width:1px;height:4px;background:#e0d070"></div>
<div class="a" style="left:822px;top:684px;width:1px;height:4px;background:#d070c0"></div>
<div class="a" style="left:831px;top:684px;width:1px;height:4px;background:#90d070"></div>
<div class="a" style="left:835px;top:684px;width:1px;height:4px;background:#d070c0"></div>
<div class="a" style="left:841px;top:684px;width:1px;height:4px;background:#e070a0"></div>
<div class="a" style="left:861px;top:684px;width:1px;height:4px;background:#d8d070"></div>
<div class="a" style="left:872px;top:684px;width:1px;height:4px;background:#d070c0"></div>
<div class="a" style="left:874px;top:684px;width:1px;height:4px;background:#d070c0"></div>
<div class="a" style="left:889px;top:684px;width:1px;height:4px;background:#c0c0c0"></div>
<div class="a" style="left:893px;top:684px;width:1px;height:4px;background:#70c8e0"></div>
<div class="a" style="left:918px;top:684px;width:1px;height:4px;background:#a0d070"></div>
<div class="a" style="left:920px;top:684px;width:1px;height:4px;background:#a0d070"></div>
<div class="a" style="left:933px;top:684px;width:1px;height:4px;background:#70a0e0"></div>
<div class="a" style="left:938px;top:684px;width:1px;height:4px;background:#70a0e0"></div>
<div class="a" style="left:942px;top:684px;width:1px;height:4px;background:#d8d070"></div>
<div class="a" style="left:963px;top:684px;width:2px;height:4px;background:#ffffff"></div>
<div class="a" style="left:965px;top:684px;width:2px;height:4px;background:#ffffff"></div>
<div class="a" style="left:972px;top:684px;width:1px;height:4px;background:#d8d070"></div>
<div class="a" style="left:973px;top:684px;width:1px;height:4px;background:#d8d070"></div>
<div class="a" style="left:997px;top:684px;width:1px;height:4px;background:#d8d070"></div>
<div class="a" style="left:1007px;top:684px;width:1px;height:4px;background:#80b0e0"></div>
<div class="a" style="left:1012px;top:684px;width:1px;height:4px;background:#80b0e0"></div>
<div class="a" style="left:1030px;top:684px;width:2px;height:4px;background:#ffffff"></div>
<div class="a" style="left:1031px;top:684px;width:1px;height:4px;background:#e0f0f0"></div>
<div class="a" style="left:1036px;top:684px;width:1px;height:4px;background:#80b0e0"></div>
<div class="a" style="left:1058px;top:684px;width:1px;height:4px;background:#80b0e0"></div>
<div class="a" style="left:1063px;top:684px;width:1px;height:4px;background:#e070b0"></div>
<div class="a" style="left:1069px;top:684px;width:1px;height:4px;background:#e070b0"></div>
<div class="a" style="left:1071px;top:684px;width:1px;height:4px;background:#e070b0"></div>
<div class="a" style="left:1076px;top:684px;width:1px;height:4px;background:#e070b0"></div>
<div class="a" style="left:1078px;top:684px;width:1px;height:4px;background:#e070b0"></div>
<div class="a" style="left:1085px;top:684px;width:1px;height:4px;background:#e070b0"></div>
<div class="a" style="left:1103px;top:684px;width:1px;height:4px;background:#70d0d0"></div>
<div class="a" style="left:1153px;top:684px;width:1px;height:4px;background:#80a0e0"></div>
<div class="a" style="left:1165px;top:684px;width:1px;height:4px;background:#80a0e0"></div>
<div class="a" style="left:216px;top:689px;width:682px;height:1px;background:#d07868"></div>
<div class="a" style="left:898px;top:689px;width:239px;height:1px;background:#e8d090"></div>
<div class="a" style="left:1137px;top:689px;width:229px;height:1px;background:#e0a070"></div>
<div class="a" style="left:216px;top:690px;width:1150px;height:1px;background:#f3dcc0"></div>
<div class="a" style="left:241px;top:691px;width:2px;height:3px;background:#d99a6d"></div>
<div class="a" style="left:263px;top:691px;width:16px;height:3px;background:#d99a6d"></div>
<div class="a" style="left:324px;top:691px;width:15px;height:3px;background:#d99a6d"></div>
<div class="a" style="left:735px;top:691px;width:7px;height:3px;background:#d99a6d"></div>
<div class="a" style="left:745px;top:691px;width:1px;height:3px;background:#d99a6d"></div>
<div class="a" style="left:751px;top:691px;width:4px;height:3px;background:#d99a6d"></div>
<div class="a" style="left:756px;top:691px;width:30px;height:3px;background:#d99a6d"></div>
<div class="a" style="left:787px;top:691px;width:7px;height:3px;background:#d99a6d"></div>
<div class="a" style="left:801px;top:691px;width:8px;height:3px;background:#d99a6d"></div>
<div class="a" style="left:827px;top:691px;width:6px;height:3px;background:#d99a6d"></div>
<div class="a" style="left:856px;top:691px;width:6px;height:3px;background:#d99a6d"></div>
<div class="a" style="left:886px;top:691px;width:7px;height:3px;background:#d99a6d"></div>
<div class="a" style="left:914px;top:691px;width:5px;height:3px;background:#d99a6d"></div>
<div class="a" style="left:939px;top:691px;width:5px;height:3px;background:#d99a6d"></div>
<div class="a" style="left:967px;top:691px;width:6px;height:3px;background:#d99a6d"></div>
<div class="a" style="left:993px;top:691px;width:5px;height:3px;background:#d99a6d"></div>
<div class="a" style="left:1031px;top:691px;width:5px;height:3px;background:#d99a6d"></div>
<div class="a" style="left:1051px;top:691px;width:5px;height:3px;background:#d99a6d"></div>
<div class="a" style="left:1100px;top:691px;width:9px;height:3px;background:#d99a6d"></div>
<div class="a" style="left:1118px;top:691px;width:7px;height:3px;background:#d99a6d"></div>
<div class="a" style="left:1131px;top:691px;width:14px;height:3px;background:#d99a6d"></div>
<div class="a" style="left:212px;top:704px;width:5px;height:3px;background:#70c070"></div>
<div class="a" style="left:215px;top:708px;width:19px;height:3px;background:#6070d0"></div>
<div class="a" style="left:248px;top:708px;width:5px;height:6px;background:#6070d0"></div>
<div class="a" style="left:248px;top:718px;width:5px;height:3px;background:#9060c0"></div>
<div class="a" style="left:215px;top:711px;width:1px;height:3px;background:#6070d0"></div>
<div class="a" style="left:233px;top:711px;width:1px;height:3px;background:#c060a0"></div>
<div class="a" style="left:215px;top:718px;width:1px;height:3px;background:#6070d0"></div>
<div class="a" style="left:233px;top:718px;width:1px;height:3px;background:#c060a0"></div>
<div class="a" style="left:782px;top:698px;width:25px;height:3px;background:#88d070"></div>
<div class="a" style="left:809px;top:698px;width:21px;height:3px;background:#88d070"></div>
<div class="a" style="left:832px;top:698px;width:27px;height:3px;background:#88d070"></div>
<div class="a" style="left:861px;top:698px;width:28px;height:3px;background:#88d070"></div>
<div class="a" style="left:890px;top:698px;width:27px;height:3px;background:#88d070"></div>
<div class="a" style="left:919px;top:698px;width:23px;height:3px;background:#88d070"></div>
<div class="a" style="left:943px;top:698px;width:20px;height:3px;background:#88d070"></div>
<div class="a" style="left:968px;top:698px;width:4px;height:3px;background:#88d070"></div>
<div class="a" style="left:973px;top:698px;width:23px;height:3px;background:#88d070"></div>
<div class="a" style="left:997px;top:698px;width:33px;height:3px;background:#88d070"></div>
<div class="a" style="left:1032px;top:698px;width:20px;height:3px;background:#88d070"></div>
<div class="a" style="left:1053px;top:698px;width:130px;height:3px;background:#88d070"></div>
<div class="a" style="left:782px;top:708px;width:4px;height:6px;background:#6a78da"></div>
<div class="a" style="left:782px;top:718px;width:4px;height:3px;background:#a070d0"></div>
<div class="a" style="left:787px;top:708px;width:20px;height:6px;background:#6a78da"></div>
<div class="a" style="left:787px;top:718px;width:20px;height:3px;background:#a070d0"></div>
<div class="a" style="left:809px;top:708px;width:15px;height:6px;background:#6a78da"></div>
<div class="a" style="left:809px;top:718px;width:15px;height:3px;background:#a070d0"></div>
<div class="a" style="left:825px;top:708px;width:1px;height:6px;background:#6a78da"></div>
<div class="a" style="left:825px;top:718px;width:1px;height:3px;background:#a070d0"></div>
<div class="a" style="left:827px;top:708px;width:3px;height:6px;background:#6a78da"></div>
<div class="a" style="left:827px;top:718px;width:3px;height:3px;background:#a070d0"></div>
<div class="a" style="left:833px;top:708px;width:7px;height:6px;background:#6a78da"></div>
<div class="a" style="left:833px;top:718px;width:7px;height:3px;background:#a070d0"></div>
<div class="a" style="left:841px;top:708px;width:5px;height:6px;background:#6a78da"></div>
<div class="a" style="left:841px;top:718px;width:5px;height:3px;background:#a070d0"></div>
<div class="a" style="left:847px;top:708px;width:2px;height:6px;background:#6a78da"></div>
<div class="a" style="left:847px;top:718px;width:2px;height:3px;background:#a070d0"></div>
<div class="a" style="left:851px;top:708px;width:2px;height:6px;background:#6a78da"></div>
<div class="a" style="left:851px;top:718px;width:2px;height:3px;background:#a070d0"></div>
<div class="a" style="left:857px;top:708px;width:2px;height:6px;background:#6a78da"></div>
<div class="a" style="left:857px;top:718px;width:2px;height:3px;background:#a070d0"></div>
<div class="a" style="left:862px;top:708px;width:4px;height:6px;background:#6a78da"></div>
<div class="a" style="left:862px;top:718px;width:4px;height:3px;background:#a070d0"></div>
<div class="a" style="left:868px;top:708px;width:5px;height:6px;background:#6a78da"></div>
<div class="a" style="left:868px;top:718px;width:5px;height:3px;background:#a070d0"></div>
<div class="a" style="left:874px;top:708px;width:2px;height:6px;background:#6a78da"></div>
<div class="a" style="left:874px;top:718px;width:2px;height:3px;background:#a070d0"></div>
<div class="a" style="left:877px;top:708px;width:2px;height:6px;background:#6a78da"></div>
<div class="a" style="left:877px;top:718px;width:2px;height:3px;background:#a070d0"></div>
<div class="a" style="left:887px;top:708px;width:2px;height:6px;background:#6a78da"></div>
<div class="a" style="left:887px;top:718px;width:2px;height:3px;background:#a070d0"></div>
<div class="a" style="left:891px;top:708px;width:11px;height:6px;background:#6a78da"></div>
<div class="a" style="left:891px;top:718px;width:11px;height:3px;background:#a070d0"></div>
<div class="a" style="left:903px;top:708px;width:2px;height:6px;background:#6a78da"></div>
<div class="a" style="left:903px;top:718px;width:2px;height:3px;background:#a070d0"></div>
<div class="a" style="left:906px;top:708px;width:2px;height:6px;background:#6a78da"></div>
<div class="a" style="left:906px;top:718px;width:2px;height:3px;background:#a070d0"></div>
<div class="a" style="left:911px;top:708px;width:2px;height:6px;background:#6a78da"></div>
<div class="a" style="left:911px;top:718px;width:2px;height:3px;background:#a070d0"></div>
<div class="a" style="left:915px;top:708px;width:2px;height:6px;background:#6a78da"></div>
<div class="a" style="left:915px;top:718px;width:2px;height:3px;background:#a070d0"></div>
<div class="a" style="left:920px;top:708px;width:5px;height:6px;background:#6a78da"></div>
<div class="a" style="left:920px;top:718px;width:5px;height:3px;background:#a070d0"></div>
<div class="a" style="left:927px;top:708px;width:3px;height:6px;background:#6a78da"></div>
<div class="a" style="left:927px;top:718px;width:3px;height:3px;background:#a070d0"></div>
<div class="a" style="left:931px;top:708px;width:1px;height:6px;background:#6a78da"></div>
<div class="a" style="left:931px;top:718px;width:1px;height:3px;background:#a070d0"></div>
<div class="a" style="left:934px;top:708px;width:2px;height:6px;background:#6a78da"></div>
<div class="a" style="left:934px;top:718px;width:2px;height:3px;background:#a070d0"></div>
<div class="a" style="left:938px;top:708px;width:1px;height:6px;background:#6a78da"></div>
<div class="a" style="left:938px;top:718px;width:1px;height:3px;background:#a070d0"></div>
<div class="a" style="left:941px;top:708px;width:1px;height:6px;background:#6a78da"></div>
<div class="a" style="left:941px;top:718px;width:1px;height:3px;background:#a070d0"></div>
<div class="a" style="left:944px;top:708px;width:2px;height:6px;background:#6a78da"></div>
<div class="a" style="left:944px;top:718px;width:2px;height:3px;background:#a070d0"></div>
<div class="a" style="left:948px;top:708px;width:2px;height:6px;background:#6a78da"></div>
<div class="a" style="left:948px;top:718px;width:2px;height:3px;background:#a070d0"></div>
<div class="a" style="left:951px;top:708px;width:1px;height:6px;background:#6a78da"></div>
<div class="a" style="left:951px;top:718px;width:1px;height:3px;background:#a070d0"></div>
<div class="a" style="left:954px;top:708px;width:2px;height:6px;background:#6a78da"></div>
<div class="a" style="left:954px;top:718px;width:2px;height:3px;background:#a070d0"></div>
<div class="a" style="left:969px;top:708px;width:2px;height:6px;background:#6a78da"></div>
<div class="a" style="left:969px;top:718px;width:2px;height:3px;background:#a070d0"></div>
<div class="a" style="left:974px;top:708px;width:4px;height:6px;background:#6a78da"></div>
<div class="a" style="left:974px;top:718px;width:4px;height:3px;background:#a070d0"></div>
<div class="a" style="left:980px;top:708px;width:6px;height:6px;background:#6a78da"></div>
<div class="a" style="left:980px;top:718px;width:6px;height:3px;background:#a070d0"></div>
<div class="a" style="left:987px;top:708px;width:2px;height:6px;background:#6a78da"></div>
<div class="a" style="left:987px;top:718px;width:2px;height:3px;background:#a070d0"></div>
<div class="a" style="left:991px;top:708px;width:1px;height:6px;background:#6a78da"></div>
<div class="a" style="left:991px;top:718px;width:1px;height:3px;background:#a070d0"></div>
<div class="a" style="left:994px;top:708px;width:1px;height:6px;background:#6a78da"></div>
<div class="a" style="left:994px;top:718px;width:1px;height:3px;background:#a070d0"></div>
<div class="a" style="left:998px;top:708px;width:10px;height:6px;background:#6a78da"></div>
<div class="a" style="left:998px;top:718px;width:10px;height:3px;background:#a070d0"></div>
<div class="a" style="left:1033px;top:708px;width:3px;height:6px;background:#6a78da"></div>
<div class="a" style="left:1033px;top:718px;width:3px;height:3px;background:#a070d0"></div>
<div class="a" style="left:1037px;top:708px;width:64px;height:6px;background:#6a78da"></div>
<div class="a" style="left:1037px;top:718px;width:64px;height:3px;background:#a070d0"></div>
<div class="a" style="left:1103px;top:708px;width:60px;height:6px;background:#6a78da"></div>
<div class="a" style="left:1103px;top:718px;width:60px;height:3px;background:#a070d0"></div>
<div class="a" style="left:1164px;top:708px;width:3px;height:6px;background:#6a78da"></div>
<div class="a" style="left:1164px;top:718px;width:3px;height:3px;background:#a070d0"></div>
<div class="a" style="left:1168px;top:708px;width:1px;height:6px;background:#6a78da"></div>
<div class="a" style="left:1168px;top:718px;width:1px;height:3px;background:#a070d0"></div>
<div class="a" style="left:1170px;top:708px;width:1px;height:6px;background:#6a78da"></div>
<div class="a" style="left:1170px;top:718px;width:1px;height:3px;background:#a070d0"></div>
<div class="a" style="left:1174px;top:708px;width:1px;height:6px;background:#6a78da"></div>
<div class="a" style="left:1174px;top:718px;width:1px;height:3px;background:#a070d0"></div>
<div class="a" style="left:212px;top:681px;width:115px;height:40px;background:rgba(0,0,0,0.35)"></div>
<div class="a" style="left:212px;top:671px;width:115px;height:10px;background:rgba(0,0,0,0.45)"></div>

<!-- TABS -->
<div class="a" style="left:212px;top:722px;width:1154px;height:20px;background:#f0f0f0"></div>
<div class="a" style="left:212px;top:721px;width:63px;height:21px;background:#fff"></div>
<div class="a" style="left:358px;top:722px;width:1px;height:18px;background:#d8d8d8"></div>
<div class="a" style="left:275px;top:739px;width:148px;height:1px;background:#e0e0e0"></div>
<div class="t tab" style="left:224px;top:727px">Timeline</div>
<div class="t tab" style="left:285px;top:727px">Flame Graph</div>
<div class="t tab" style="left:369px;top:727px;letter-spacing:-0.1px">Statistics</div>

<!-- STATUS BAR -->
<div class="a" style="left:71px;top:742px;width:1295px;height:26px;background:#404244"></div>
<div class="a" style="left:71px;top:766px;width:1295px;height:2px;background:#262728"></div>
<div class="a" style="left:72px;top:745px;width:24px;height:20px;background:#2e2f30"></div>
<svg style="left:78px;top:750px" width="12" height="11"><rect x="0.5" y="0.5" width="11" height="10" fill="none" stroke="#c9c9c9"/><rect x="0" y="0" width="4" height="11" fill="#c9c9c9"/></svg>
<div class="a" style="left:102px;top:745px;width:200px;height:21px;background:#fff"></div>
<svg style="left:107px;top:748px" width="18" height="15" viewBox="0 0 18 15"><circle cx="9" cy="5.5" r="4.3" fill="none" stroke="#6a6a6a" stroke-width="1.3"/><path d="M6 8.5 L1.2 13.3" stroke="#6a6a6a" stroke-width="2" stroke-linecap="round"/><path d="M12 11.5 H16 L14 13.5Z" fill="#6a6a6a"/></svg>
<div class="t" style="left:129px;top:750px;font-size:12px;color:#727272;letter-spacing:-0.1px">Type to locate (Ctrl+K)</div>
<div class="a" style="left:305px;top:745px;width:1px;height:20px;background:#5b5d5f"></div>

<div class="t sb" style="left:315px;top:751px">1</div><div class="t sb" style="left:328px;top:751px">Issues</div>
<div class="t sb" style="left:377px;top:751px">2</div><div class="t sb" style="left:391px;top:751px">Search Results</div>
<div class="t sb" style="left:479px;top:751px">3</div><div class="t sb" style="left:493px;top:751px">Application Output</div>
<div class="t sb" style="left:599px;top:751px">4</div><div class="t sb" style="left:612px;top:751px">Compile Output</div>
<div class="t sb" style="left:704px;top:751px">5</div><div class="t sb" style="left:717px;top:751px">Debugger Console</div>
<div class="t sb" style="left:823px;top:751px">6</div><div class="t sb" style="left:836px;top:751px">General Messages</div>
<div class="t sb" style="left:941px;top:751px">8</div><div class="t sb" style="left:954px;top:751px">Test Results</div>
<svg style="left:1032px;top:749px" width="9" height="13"><path d="M0.5 5 L4.5 0.5 L8.5 5Z M0.5 8 L4.5 12.5 L8.5 8Z" fill="#c9c9c9"/></svg>
<svg style="left:1325px;top:752px" width="9" height="6"><path d="M0 5.5 L4.5 0.5 L9 5.5Z" fill="#d0d0d0"/></svg>
<svg style="left:1348px;top:750px" width="12" height="11"><rect x="0.5" y="0.5" width="11" height="10" fill="none" stroke="#7a7a7a"/><rect x="6" y="0" width="6" height="11" fill="#7a7a7a"/></svg>

</body></html>
